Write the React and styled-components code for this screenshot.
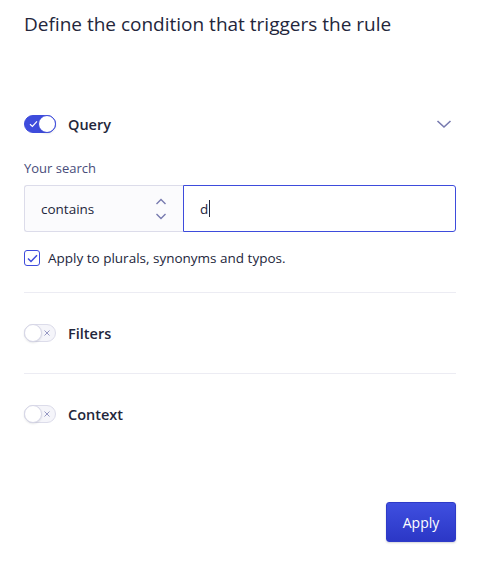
import React from 'react'
import styled, { createGlobalStyle } from 'styled-components'

const GlobalStyle = createGlobalStyle`
    body {
        margin: 0;
        background: #ffffff;
        font-family: "Open Sans", "Noto Sans", sans-serif;
        color: #23263b;
    }
`

// Layout
const Panel = styled.div`
    width: 478px;
    height: 569px;
    box-sizing: border-box;
    padding: 10px 22px 0 24px;
    display: flex;
    flex-direction: column;
`

const Title = styled.h1`
    margin: 0;
    font-size: 19px;
    font-weight: 400;
    line-height: 28px;
    color: #23263b;
`

const Section = styled.div`
    display: flex;
    flex-direction: column;
    margin-top: ${props => props.$top || 0}px;
`

const Header = styled.div`
    display: flex;
    align-items: center;
    height: 32px;
    gap: 12px;
`

const SectionName = styled.span`
    font-size: 14.5px;
    font-weight: 600;
    color: #23263b;
    flex: 1;
`

const Chevron = styled.button`
    border: none;
    background: transparent;
    padding: 0;
    width: 24px;
    height: 24px;
    display: flex;
    align-items: center;
    justify-content: center;
`

const Divider = styled.hr`
    border: none;
    border-top: 1px solid #ececf3;
    margin: 0;
`

// Toggle
const Toggle = styled.span`
    position: relative;
    width: 32px;
    height: 18px;
    box-sizing: border-box;
    border-radius: 9px;
    flex: none;
    background: ${props => props.$on ? '#3e4cdc' : '#f5f5fa'};
    border: 1px solid ${props => props.$on ? '#3e4cdc' : '#dcdcea'};
`

const Knob = styled.span`
    position: absolute;
    top: -1px;
    ${props => props.$on ? 'right: -1px;' : 'left: -1px;'}
    width: 18px;
    height: 18px;
    box-sizing: border-box;
    border-radius: 50%;
    background: #ffffff;
    border: 1px solid ${props => props.$on ? '#3e4cdc' : '#d6d6e7'};
    box-shadow: 0 1px 2px rgba(35, 38, 59, 0.12);
`

const Mark = styled.svg`
    position: absolute;
    top: 4px;
    ${props => props.$on ? 'left: 4px;' : 'right: 4px;'}
`

function Switch({ on }) {
    return (
        <Toggle $on={on}>
            {on ? (
                <Mark $on width="9" height="8" viewBox="0 0 9 8">
                    <path d="M1 4.2 L3.4 6.4 L8 1.4" fill="none" stroke="#ffffff" strokeWidth="1.2" />
                </Mark>
            ) : (
                <Mark width="8" height="8" viewBox="0 0 8 8">
                    <path d="M1.5 1.5 L6.5 6.5 M6.5 1.5 L1.5 6.5" fill="none" stroke="#9698c3" strokeWidth="1" />
                </Mark>
            )}
            <Knob $on={on} />
        </Toggle>
    )
}

// Query body
const Label = styled.div`
    margin-top: 19px;
    font-size: 13px;
    color: #484c7a;
    line-height: 18px;
`

const SearchRow = styled.div`
    display: flex;
    margin-top: 8px;
    height: 47px;
`

const Select = styled.div`
    width: 159px;
    box-sizing: border-box;
    display: flex;
    align-items: center;
    justify-content: space-between;
    padding: 0 16px 0 16px;
    background: #fbfbfd;
    border: 1px solid #dcdcea;
    border-right: none;
    border-radius: 3px 0 0 3px;
    font-size: 13.5px;
    color: #23263b;
`

const Input = styled.div`
    flex: 1;
    box-sizing: border-box;
    display: flex;
    align-items: center;
    padding-left: 16px;
    border: 1px solid #3e4cdc;
    border-radius: 0 3px 3px 0;
    background: #ffffff;
    font-size: 13.5px;
    color: #23263b;
`

const Caret = styled.span`
    width: 1px;
    height: 17px;
    background: #23263b;
    margin-left: 1px;
`

const CheckRow = styled.label`
    display: flex;
    align-items: center;
    gap: 8px;
    margin-top: 17px;
    font-size: 13.5px;
    color: #23263b;
    height: 18px;
`

const CheckBox = styled.span`
    width: 16px;
    height: 16px;
    box-sizing: border-box;
    border: 1px solid #3e4cdc;
    border-radius: 3px;
    display: flex;
    align-items: center;
    justify-content: center;
    background: #ffffff;
`

const Footer = styled.div`
    display: flex;
    justify-content: flex-end;
    margin-top: auto;
    margin-bottom: 27px;
`

const ApplyButton = styled.button`
    width: 70px;
    height: 40px;
    border: 1px solid #2e3ac8;
    border-radius: 3px;
    background: linear-gradient(180deg, #3f4fe0 0%, #2b37c6 100%);
    color: #ffffff;
    font-family: inherit;
    font-size: 14px;
    box-shadow: 0 1px 2px rgba(35, 38, 59, 0.2);
`

export default function App() {
    return (
        <>
            <GlobalStyle />
            <Panel>
                <Title>Define the condition that triggers the rule</Title>

                <Section $top={70}>
                    <Header>
                        <Switch on />
                        <SectionName>Query</SectionName>
                        <Chevron>
                            <svg width="16" height="10" viewBox="0 0 16 10">
                                <path d="M1.5 2 L8 8 L14.5 2" fill="none" stroke="#777aaf" strokeWidth="1.6" />
                            </svg>
                        </Chevron>
                    </Header>
                    <Label>Your search</Label>
                    <SearchRow>
                        <Select>
                            contains
                            <svg width="12" height="24" viewBox="0 0 12 24">
                                <path d="M1.5 7 L6 2.5 L10.5 7 M1.5 17 L6 21.5 L10.5 17" fill="none" stroke="#777aaf" strokeWidth="1.4" />
                            </svg>
                        </Select>
                        <Input>d<Caret /></Input>
                    </SearchRow>
                    <CheckRow>
                        <CheckBox>
                            <svg width="11" height="9" viewBox="0 0 11 9">
                                <path d="M1 4.5 L4 7.5 L10 1.2" fill="none" stroke="#3e4cdc" strokeWidth="1.5" />
                            </svg>
                        </CheckBox>
                        Apply to plurals, synonyms and typos.
                    </CheckRow>
                </Section>

                <Section $top={25}>
                    <Divider />
                </Section>

                <Section $top={24}>
                    <Header>
                        <Switch />
                        <SectionName>Filters</SectionName>
                    </Header>
                </Section>

                <Section $top={24}>
                    <Divider />
                </Section>

                <Section $top={24}>
                    <Header>
                        <Switch />
                        <SectionName>Context</SectionName>
                    </Header>
                </Section>

                <Footer>
                    <ApplyButton>Apply</ApplyButton>
                </Footer>
            </Panel>
        </>
    )
}
